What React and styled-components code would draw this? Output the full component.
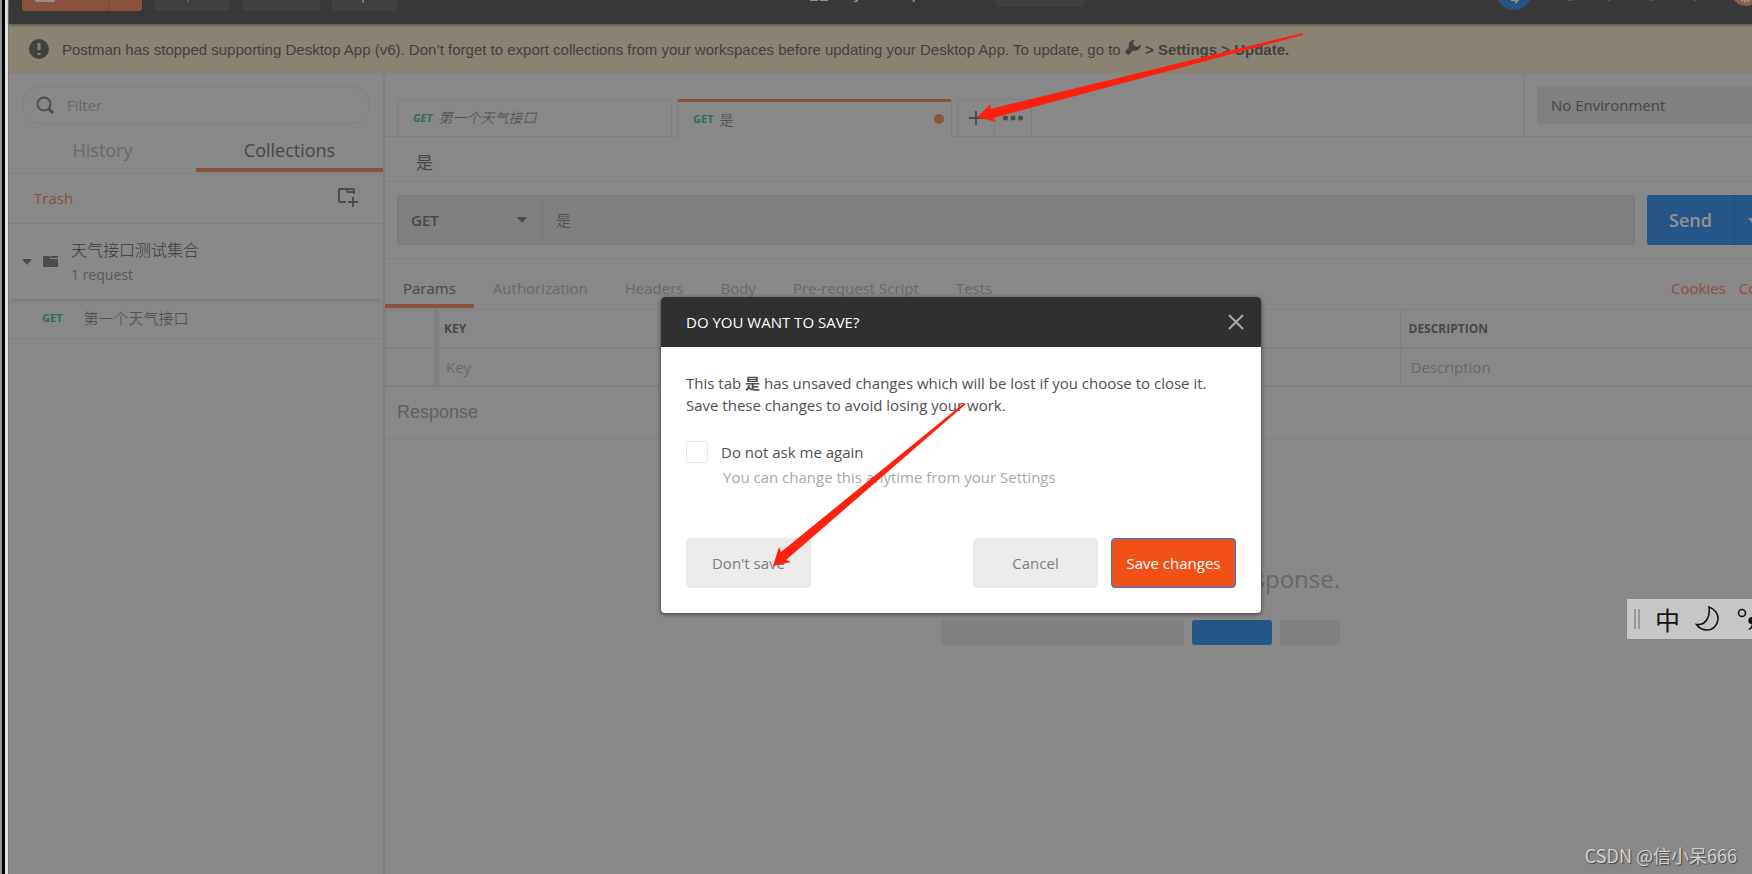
import React, { useState } from 'react';
import styled, { createGlobalStyle } from 'styled-components';

const sans = `'Open Sans', 'Noto Sans CJK SC', sans-serif`;
const arial = `'Liberation Sans', 'Noto Sans CJK SC', sans-serif`;

const requestTabs = ['Params', 'Authorization', 'Headers', 'Body', 'Pre-request Script', 'Tests'];

function App() {
    const [activeTab, setActiveTab] = useState('Params');
    const [dontAsk, setDontAsk] = useState(false);

    return (
        <Page>
            <GlobalStyle />
            <DesktopEdge />
            <Window>
                <Header />
                <Banner>
                    <AlertIcon />
                    <p>
                        Postman has stopped supporting Desktop App (v6). Don’t forget to export collections from your
                        workspaces before updating your Desktop App. To update, go to <WrenchIcon />
                        <b> &gt; Settings &gt; Update.</b>
                    </p>
                </Banner>
                <Workspace>
                    <Sidebar />
                    <Main>
                        <TabBar>
                            <Tabs>
                                <FileTab $preview>
                                    <Method>GET</Method>
                                    <span>第一个天气接口</span>
                                </FileTab>
                                <FileTab $active>
                                    <Method>GET</Method>
                                    <span>是</span>
                                    <UnsavedDot />
                                </FileTab>
                                <TabActions>
                                    <TabAction aria-label="New tab">
                                        <svg width="16" height="16" viewBox="0 0 16 16">
                                            <path d="M8 1v14M1 8h14" stroke="#4d4d4d" strokeWidth="2" />
                                        </svg>
                                    </TabAction>
                                    <TabAction aria-label="More">
                                        <svg width="20" height="6" viewBox="0 0 20 6" fill="#4d4d4d">
                                            <circle cx="2.500" cy="3" r="2.500" />
                                            <circle cx="10" cy="3" r="2.500" />
                                            <circle cx="17.500" cy="3" r="2.500" />
                                        </svg>
                                    </TabAction>
                                </TabActions>
                            </Tabs>
                            <EnvironmentBox>
                                <EnvironmentSelect aria-label="Environment">
                                    <option>No Environment</option>
                                </EnvironmentSelect>
                            </EnvironmentBox>
                        </TabBar>
                        <RequestName>是</RequestName>
                        <UrlRow>
                            <UrlBox>
                                <MethodPicker>
                                    <select aria-label="Method">
                                        <option>GET</option>
                                    </select>
                                    <Caret />
                                </MethodPicker>
                                <UrlInput aria-label="Request URL" defaultValue="是" />
                            </UrlBox>
                            <SendGroup>
                                <SendButton>Send</SendButton>
                                <SendMenu aria-label="Send options">
                                    <Caret $light />
                                </SendMenu>
                            </SendGroup>
                        </UrlRow>
                        <RequestTabs>
                            {requestTabs.map((name) => (
                                <RequestTab
                                    key={name}
                                    $active={name === activeTab}
                                    onClick={() => setActiveTab(name)}
                                >
                                    {name}
                                </RequestTab>
                            ))}
                            <RequestLinks>
                                <a href="#cookies">Cookies</a>
                                <a href="#code">Code</a>
                            </RequestLinks>
                        </RequestTabs>
                        <ParamsTable>
                            <thead>
                                <tr>
                                    <th />
                                    <th>KEY</th>
                                    <th>VALUE</th>
                                    <th>DESCRIPTION</th>
                                </tr>
                            </thead>
                            <tbody>
                                <tr>
                                    <td />
                                    <td><input aria-label="Key" placeholder="Key" /></td>
                                    <td><input aria-label="Value" placeholder="Value" /></td>
                                    <td><input aria-label="Description" placeholder="Description" /></td>
                                </tr>
                            </tbody>
                        </ParamsTable>
                        <ResponseTitle>Response</ResponseTitle>
                        <EmptyResponse>
                            <p>Hit the Send button to get a response.</p>
                            <Placeholders>
                                <Bar $grow={243} />
                                <Bar $grow={80} $blue />
                                <Bar $grow={60} />
                            </Placeholders>
                        </EmptyResponse>
                    </Main>
                </Workspace>
                <Overlay>
                    <Modal role="dialog" aria-labelledby="save-title">
                        <ModalHeader>
                            <h2 id="save-title">DO YOU WANT TO SAVE?</h2>
                            <CloseButton aria-label="Close">
                                <svg width="16" height="16" viewBox="0 0 16 16">
                                    <path d="M1 1l14 14M15 1L1 15" stroke="#a8a8a8" strokeWidth="2" />
                                </svg>
                            </CloseButton>
                        </ModalHeader>
                        <ModalBody>
                            <p>
                                This tab <b>是</b> has unsaved changes which will be lost if you choose to close it.
                                Save these changes to avoid losing your work.
                            </p>
                            <AskAgain>
                                <input
                                    type="checkbox"
                                    checked={dontAsk}
                                    onChange={(e) => setDontAsk(e.target.checked)}
                                />
                                Do not ask me again
                            </AskAgain>
                            <Hint>You can change this anytime from your Settings</Hint>
                            <ModalButtons>
                                <Button>Don't save</Button>
                                <Button>Cancel</Button>
                                <Button $primary>Save changes</Button>
                            </ModalButtons>
                        </ModalBody>
                    </Modal>
                </Overlay>
            </Window>
            <Arrows viewBox="0 0 1752 874" fill="#ff2010">
                <path d="M1303 33L990 109L991 104L977 117L996 122L993 118L1303 35Z" />
                <path d="M964 403L781 552L779 547L773 566L791 562L786 560L966 404Z" />
            </Arrows>
            <ImeBar>
                <ImeGrip />
                <span>中</span>
                <svg width="25" height="26" viewBox="0 0 25 26" fill="none" stroke="#111" strokeWidth="1.6">
                    <path d="M14 1c6 2 9.500 7 9 12.500c-.6 6-5 10.500-11 10.500c-4.500 0-8-2-10.500-5.500c9 1 14-7 12.500-17.500z" />
                </svg>
                <svg width="26" height="26" viewBox="0 0 26 26">
                    <circle cx="7" cy="7" r="3.500" fill="none" stroke="#111" strokeWidth="1.6" />
                    <path d="M17 11a3.500 3.500 0 0 1 3 5c-.5 4-3 7-6 8l-.5-1c2-1 3-3 3.200-5a3.500 3.500 0 0 1 .3-7z" fill="#111" />
                </svg>
            </ImeBar>
            <Watermark>CSDN @信小呆666</Watermark>
        </Page>
    );
}

function Header() {
    return (
        <HeaderBar>
            <NewButton>
                <svg width="20" height="20" viewBox="0 0 20 20">
                    <rect width="20" height="20" rx="2" fill="#8f8f8f" />
                </svg>
                New
            </NewButton>
            <HeaderButton $width={76}>Import</HeaderButton>
            <HeaderButton $width={78}>Runner</HeaderButton>
            <HeaderButton $width={65} aria-label="Open new">
                <svg width="20" height="22" viewBox="0 0 20 22" stroke="#777" strokeWidth="2" fill="none">
                    <path d="M1 1h14v8H1zM8 14v8" />
                </svg>
            </HeaderButton>
            <WorkspaceName>
                <svg width="18" height="16" viewBox="0 0 18 16" fill="#8f8f8f">
                    <path d="M0 0h8v7H0zM10 0h8v7h-8zM0 9h8v7H0zM10 9h8v7h-8z" />
                </svg>
                My Workspace
            </WorkspaceName>
            <InviteButton aria-label="Invite">
                <svg width="3" height="18" viewBox="0 0 3 18">
                    <path d="M0 0h3v18H0z" fill="#8f8f8f" />
                </svg>
            </InviteButton>
            <HeaderIcons width="256" height="48" viewBox="0 0 256 48">
                <circle cx="18" cy="29" r="18" fill="#275482" />
                <path d="M15 37h6M19 34l3 3-3 3" stroke="#8f8f8f" strokeWidth="2" fill="none" />
                <circle cx="74" cy="29" r="9" fill="#5a5a5a" />
                <circle cx="113" cy="36" r="2" fill="#5a5a5a" />
                <circle cx="155" cy="36" r="2" fill="#5a5a5a" />
                <circle cx="199" cy="36" r="2" fill="#5a5a5a" />
                <circle cx="250" cy="28" r="15" fill="#8a5d49" />
                <circle cx="250" cy="32" r="6" fill="none" stroke="#999" strokeWidth="3" strokeDasharray="2 1" />
            </HeaderIcons>
        </HeaderBar>
    );
}

function Sidebar() {
    return (
        <Side>
            <FilterBox>
                <svg width="18" height="18" viewBox="0 0 18 18" fill="none" stroke="#4d4d4d" strokeWidth="2">
                    <circle cx="8" cy="8" r="6.500" />
                    <path d="M12.500 12.500l4.500 4.500" strokeWidth="3" />
                </svg>
                <input aria-label="Filter" placeholder="Filter" />
            </FilterBox>
            <SideTabs>
                <SideTab>History</SideTab>
                <SideTab $active>Collections</SideTab>
            </SideTabs>
            <SideActions>
                <a href="#trash">Trash</a>
                <IconButton aria-label="New collection">
                    <svg width="20" height="20" viewBox="0 0 20 20" fill="none" stroke="#4d4d4d" strokeWidth="2">
                        <path d="M8 14H2a1 1 0 0 1-1-1V2a1 1 0 0 1 1-1h13a1 1 0 0 1 1 1v4M8 1l2 3h6" />
                        <path d="M15 9v10M10 14h10" />
                    </svg>
                </IconButton>
            </SideActions>
            <Collection>
                <Caret />
                <svg width="15" height="11" viewBox="0 0 15 11" fill="#4d4d4d">
                    <path d="M0 0h6l2 3h7v8H0zM7 0h8v2H8z" />
                </svg>
                <div>
                    <h3>天气接口测试集合</h3>
                    <p>1 request</p>
                </div>
            </Collection>
            <RequestItem>
                <Method>GET</Method>
                <span>第一个天气接口</span>
            </RequestItem>
        </Side>
    );
}

function AlertIcon() {
    return (
        <svg width="20" height="20" viewBox="0 0 20 20">
            <circle cx="10" cy="10" r="10" fill="#424242" />
            <path d="M10 4v7M10 14v2" stroke="#8a8374" strokeWidth="3" />
        </svg>
    );
}

function WrenchIcon() {
    return (
        <svg width="16" height="15" viewBox="0 0 16 15" fill="#424242">
            <path d="M10 0C5 0 3 3 4 7L1 10.500c-1.500 2.500 1 5 3.500 4L8 10.500c5 1 8-2 7.500-6.500l-3 3-3.500-1.500-1-3z" />
        </svg>
    );
}

const GlobalStyle = createGlobalStyle`
    * {
        box-sizing: border-box;
    }

    body {
        margin: 0;
        overflow: hidden;
        background: #888888;
        font-family: ${sans};
        font-size: 15px;
        color: #484848;
    }

    h2, h3, p {
        margin: 0;
        font-weight: 400;
    }

    button, input, select {
        font: inherit;
        color: inherit;
        border: 0;
        margin: 0;
        padding: 0;
        background: none;
        outline: none;
    }

    input {
        min-width: 0;
    }

    select {
        appearance: none;
    }

    input::placeholder {
        color: #696969;
        opacity: 1;
    }

    a {
        color: #8b513c;
        text-decoration: none;
    }

    svg {
        flex-shrink: 0;
    }
`;

const Page = styled.div`
    position: relative;
    display: flex;
    height: 100vh;
    overflow: hidden;
`;

const DesktopEdge = styled.div`
    flex: 0 0 9px;
    background: linear-gradient(to right, #969696 2px, #000 2px 5px, #e2e2e2 5px 8px, #777 8px);
`;

/* the app window runs off the right side of the screen */
const Window = styled.div`
    position: relative;
    display: flex;
    flex-direction: column;
    flex: 0 0 calc(100% + 152px);
`;

const HeaderBar = styled.header`
    display: flex;
    align-items: flex-end;
    flex: 0 0 24px;
    height: 24px;
    padding: 0 13px 13px;
    overflow: hidden;
    background: #383838;
    color: #8f8f8f;
    box-shadow: 0 1px 3px rgba(0, 0, 0, 0.4);
    z-index: 1;
`;

const HeaderButton = styled.button`
    display: flex;
    align-items: center;
    justify-content: center;
    width: ${(props) => props.$width}px;
    height: 38px;
    margin-right: 12px;
    border-radius: 3px;
    background: #404040;
    font-size: 14px;
    color: #777;
`;

const NewButton = styled(HeaderButton)`
    justify-content: flex-start;
    width: 120px;
    padding: 0 13px;
    gap: 10px;
    background: linear-gradient(to right, #8a513c 86px, #7c4633 86px 87px, #8a513c 87px);
    color: #8f8f8f;
`;

const WorkspaceName = styled.div`
    display: flex;
    align-items: center;
    gap: 12px;
    height: 36px;
    margin-left: 401px;
    font-weight: 600;
`;

const InviteButton = styled(HeaderButton)`
    justify-content: flex-start;
    align-self: flex-end;
    width: 88px;
    height: 32px;
    margin: 0 0 4px 50px;
    padding-left: 21px;
`;

const HeaderIcons = styled.svg`
    margin: 0 148px 0 auto;
`;

const Banner = styled.div`
    display: flex;
    align-items: center;
    flex: 0 0 50px;
    gap: 13px;
    padding: 0 20px;
    background: #8a8374;
    font-family: ${arial};
    color: #424242;
    white-space: nowrap;
`;

const Workspace = styled.div`
    display: flex;
    flex: 1;
    min-height: 0;
`;

const Side = styled.aside`
    flex: 0 0 376px;
    border-right: 2px solid #7f7f7f;
`;

const FilterBox = styled.div`
    display: flex;
    align-items: center;
    gap: 13px;
    height: 38px;
    margin: 12px 13px;
    padding: 0 13px;
    border: 1px solid #808080;
    border-radius: 19px;
`;

const SideTabs = styled.div`
    display: flex;
    height: 38px;
    border-bottom: 1px solid #808080;
`;

const SideTab = styled.button`
    flex: 1;
    height: 36px;
    padding-bottom: 4px;
    border-bottom: 4px solid ${(props) => (props.$active ? '#8b513c' : 'transparent')};
    font-size: 18px;
    color: ${(props) => (props.$active ? '#484848' : '#696969')};
`;

const SideActions = styled.div`
    display: flex;
    align-items: center;
    justify-content: space-between;
    height: 50px;
    padding: 0 25px 2px;
    border-bottom: 1px solid #808080;
`;

const IconButton = styled.button`
    display: flex;
`;

const Caret = styled.i`
    flex: none;
    border: 5px solid transparent;
    border-top: 6px solid ${(props) => (props.$light ? '#8f8f8f' : '#4d4d4d')};
    border-bottom: 0;
`;

const Collection = styled.div`
    display: flex;
    align-items: center;
    gap: 11px;
    height: 75px;
    padding: 0 13px;
    background: #898989;
    box-shadow: 0 4px 4px -2px rgba(0, 0, 0, 0.12);

    div {
        padding-left: 2px;
    }

    h3 {
        font-size: 16px;
        font-weight: 300;
        line-height: 26px;
        color: #3c3c3c;
    }

    p {
        font-size: 14px;
        line-height: 24px;
        color: #5a5a5a;
    }
`;

const Method = styled.strong`
    font-size: 11px;
    font-weight: 700;
    color: #2f6f58;
`;

const RequestItem = styled.div`
    display: flex;
    align-items: center;
    gap: 21px;
    height: 40px;
    padding: 0 0 2px 33px;
    border-bottom: 1px solid #808080;

    span {
        font-weight: 300;
    }
`;

const Main = styled.main`
    display: flex;
    flex-direction: column;
    flex: 1;
    min-width: 0;
    margin-right: 17px;
`;

const TabBar = styled.div`
    display: flex;
    height: 63px;
    border-bottom: 1px solid #808080;
`;

const Tabs = styled.div`
    display: flex;
    align-items: flex-end;
    flex: 1;
    padding: 25px 12px 0;
`;

const FileTab = styled.div`
    display: flex;
    align-items: center;
    gap: 6px;
    width: 275px;
    height: ${(props) => (props.$active ? 38 : 37)}px;
    margin: 0 5px ${(props) => (props.$active ? -1 : 0)}px 0;
    padding: 0 7px 2px 15px;
    border: 1px solid #808080;
    border-top: ${(props) => (props.$active ? '3px solid #8b513c' : '1px solid #808080')};
    border-bottom: 0;
    border-radius: 3px 3px 0 0;
    background: #888888;
    font-size: 14px;
    font-style: ${(props) => (props.$preview ? 'italic' : 'normal')};
    font-weight: 300;
`;

const UnsavedDot = styled.i`
    width: 10px;
    height: 10px;
    margin-left: auto;
    border-radius: 50%;
    background: #8b5638;
`;

const TabActions = styled.div`
    display: flex;
    height: 37px;
    border: 1px solid #808080;
    border-bottom: 0;
    border-radius: 3px 3px 0 0;
`;

const TabAction = styled.button`
    display: flex;
    align-items: center;
    justify-content: center;
    width: 36px;

    & + & {
        width: 37px;
        border-left: 1px solid #808080;
    }
`;

const EnvironmentBox = styled.div`
    width: 373px;
    padding: 12px;
    border-left: 2px solid #808080;
`;

const EnvironmentSelect = styled.select`
    width: 100%;
    height: 38px;
    padding: 0 14px;
    border-radius: 3px;
    background: #808080;
    font-weight: 500;
`;

const RequestName = styled.h2`
    height: 45px;
    padding-left: 31px;
    border-bottom: 1px solid #808080;
    font-size: 17px;
    line-height: 52px;
`;

const UrlRow = styled.div`
    display: flex;
    gap: 12px;
    height: 77px;
    padding: 13px 12px;
    border-bottom: 1px solid #808080;
`;

const UrlBox = styled.div`
    display: flex;
    flex: 1;
    border: 1px solid #777;
    border-radius: 3px;
    background: #808080;
`;

const MethodPicker = styled.div`
    display: flex;
    align-items: center;
    width: 145px;
    padding: 0 15px 0 13px;
    border-right: 1px solid #777;
    font-weight: 600;

    select {
        flex: 1;
    }
`;

const UrlInput = styled.input`
    flex: 1;
    padding: 0 0 2px 13px;
    font-size: 15px;
    font-weight: 300;
`;

const SendGroup = styled.div`
    display: flex;
    width: 237px;
`;

const SendButton = styled.button`
    width: 87px;
    border-radius: 3px 0 0 3px;
    background: #265687;
    color: #919191;
    font-size: 18px;
    font-weight: 600;
`;

const SendMenu = styled.button`
    width: 36px;
    padding-top: 2px;
    border-left: 1px solid #234d78;
    border-radius: 0 3px 3px 0;
    background: #265687;
    display: flex;
    align-items: center;
    justify-content: center;
`;

const RequestTabs = styled.div`
    display: flex;
    align-items: flex-end;
    gap: 1px;
    height: 51px;
    padding-bottom: 1px;
    border-bottom: 1px solid #808080;
`;

const RequestTab = styled.button`
    height: 37px;
    padding: 0 18px;
    border-bottom: 4px solid ${(props) => (props.$active ? '#8b513c' : 'transparent')};
    color: ${(props) => (props.$active ? '#484848' : '#696969')};
`;

const RequestLinks = styled.nav`
    display: flex;
    gap: 13px;
    width: 225px;
    height: 37px;
    margin-left: auto;
    line-height: 34px;
`;

const ParamsTable = styled.table`
    width: 100%;
    border-collapse: collapse;
    table-layout: fixed;
    text-align: left;

    tr {
        height: 38px;
        border-bottom: 2px solid #808080;
    }

    th, td {
        padding: 0 8px;
        border-left: 1px solid #808080;
    }

    th {
        font-size: 12px;
        font-weight: 700;
    }

    th:first-child, td:first-child {
        width: 51px;
        border-right: 5px solid #808080;
    }

    th:nth-child(2), td:nth-child(2) {
        border-left: 0;
        padding-left: 5px;
    }

    th:last-child, td:last-child {
        width: 496px;
    }

    td input {
        width: 100%;
        padding-left: 2px;
    }
`;

const ResponseTitle = styled.h2`
    height: 52px;
    padding-left: 12px;
    border-bottom: 1px solid #808080;
    font-family: ${arial};
    font-size: 18px;
    line-height: 50px;
    color: #626262;
`;

const EmptyResponse = styled.div`
    width: 399px;
    margin: 124px auto 0;
    font-size: 24px;
    line-height: 32px;
    color: #696969;

    p {
        display: flex;
        justify-content: flex-end;
        white-space: nowrap;
    }
`;

const Placeholders = styled.div`
    display: flex;
    gap: 8px;
    padding-top: 25px;
`;

const Bar = styled.div`
    flex: ${(props) => props.$grow} 0 0;
    height: 25px;
    border-radius: 3px;
    background: ${(props) => (props.$blue ? '#265687' : '#808080')};
`;

const Overlay = styled.div`
    position: absolute;
    inset: 0;
    display: flex;
    align-items: flex-start;
    justify-content: center;
    padding-top: 297px;
    z-index: 2;
`;

const Modal = styled.section`
    width: 600px;
    border-radius: 4px;
    overflow: hidden;
    background: #fff;
    box-shadow: 0 1px 4px rgba(0, 0, 0, 0.6);
`;

const ModalHeader = styled.header`
    display: flex;
    align-items: center;
    justify-content: space-between;
    height: 50px;
    padding: 0 17px 0 25px;
    background: #303030;
    color: #fff;

    h2 {
        font-size: 15px;
        font-weight: 500;
    }
`;

const CloseButton = styled.button`
    display: flex;
`;

const ModalBody = styled.div`
    padding: 25px;
    color: #505050;

    p {
        line-height: 22px;
    }
`;

const AskAgain = styled.label`
    display: flex;
    align-items: center;
    gap: 13px;
    margin-top: 25px;
    line-height: 22px;

    input {
        appearance: none;
        width: 22px;
        height: 22px;
        border: 1px solid #e6e6e6;
        border-radius: 3px;
    }

    input:checked {
        background: #f15018;
    }
`;

const Hint = styled.p`
    padding: 3px 0 0 37px;
    color: #a9a9a9;
`;

const ModalButtons = styled.div`
    display: flex;
    gap: 13px;
    margin-top: 50px;
`;

const Button = styled.button`
    width: 125px;
    height: 50px;
    border: 1px solid ${(props) => (props.$primary ? '#147ff0' : '#ebebeb')};
    border-radius: 4px;
    background: ${(props) => (props.$primary ? '#f15018' : '#ebebeb')};
    color: ${(props) => (props.$primary ? '#fff' : '#808080')};
    font-weight: ${(props) => (props.$primary ? 500 : 400)};

    &:first-child {
        margin-right: auto;
    }
`;

const Arrows = styled.svg`
    position: absolute;
    top: 0;
    left: 0;
    width: 1752px;
    height: 874px;
    z-index: 3;
    pointer-events: none;
`;

const ImeBar = styled.div`
    position: absolute;
    top: 599px;
    right: 0;
    z-index: 3;
    display: flex;
    align-items: center;
    gap: 15px;
    width: 125px;
    height: 40px;
    padding-left: 7px;
    overflow: hidden;
    background: #c6c6c6;
    color: #111;
    font-size: 25px;
`;

const ImeGrip = styled.i`
    flex: none;
    width: 6px;
    height: 20px;
    border: 2px solid #9a9a9a;
    border-width: 0 2px;
`;

const Watermark = styled.div`
    position: absolute;
    right: 15px;
    bottom: 6px;
    z-index: 3;
    font-family: 'Noto Sans CJK SC', sans-serif;
    font-size: 18px;
    line-height: 26px;
    color: #d0d0d0;
    text-shadow: 1px 1px 1px #444;
`;

export default App;
